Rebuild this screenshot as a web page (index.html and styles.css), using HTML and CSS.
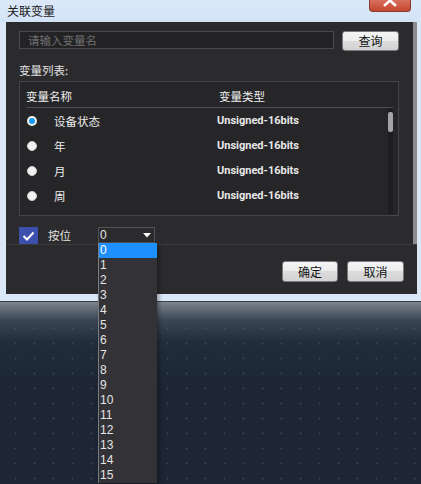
FILE: index.html
```html
<!DOCTYPE html>
<html>
<head>
    <title>关联变量</title>
    <link rel="stylesheet" href="styles.css">
</head>
<body>
    <div class="window">
        <div class="titlebar">
            <span class="title">关联变量</span>
            <div class="close-btn">
                <svg width="42" height="12" viewBox="0 0 42 12">
                    <path d="M16 -3 L26 6 M26 -3 L16 6" stroke="#fff" stroke-width="2.6" stroke-linecap="square"/>
                </svg>
            </div>
        </div>

        <div class="panel">
            <div class="upper">
                <div class="upper-body">
                    <div class="search-row">
                        <input class="search-input" type="text" placeholder="请输入变量名">
                        <button class="btn btn-query">查询</button>
                    </div>

                    <div class="list-label">变量列表:</div>

                    <div class="list-box">
                        <div class="list-head">
                            <span class="col-name">变量名称</span>
                            <span class="col-type">变量类型</span>
                        </div>
                        <div class="list-body">
                            <div class="rows">
                                <div class="row">
                                    <span class="radio checked"></span>
                                    <span class="row-name">设备状态</span>
                                    <span class="row-type">Unsigned-16bits</span>
                                </div>
                                <div class="row">
                                    <span class="radio"></span>
                                    <span class="row-name">年</span>
                                    <span class="row-type">Unsigned-16bits</span>
                                </div>
                                <div class="row">
                                    <span class="radio"></span>
                                    <span class="row-name">月</span>
                                    <span class="row-type">Unsigned-16bits</span>
                                </div>
                                <div class="row">
                                    <span class="radio"></span>
                                    <span class="row-name">周</span>
                                    <span class="row-type">Unsigned-16bits</span>
                                </div>
                                <div class="row">
                                    <span class="radio"></span>
                                    <span class="row-name">日</span>
                                    <span class="row-type">Unsigned-16bits</span>
                                </div>
                            </div>
                            <div class="list-scroll">
                                <div class="list-thumb"></div>
                            </div>
                        </div>
                    </div>

                    <div class="bit-row">
                        <span class="checkbox">
                            <svg width="19" height="17" viewBox="0 0 19 17">
                                <path d="M4.5 9 L8 12.5 L14.5 5.5" fill="none" stroke="#fff" stroke-width="2"/>
                            </svg>
                        </span>
                        <span class="bit-label">按位</span>
                        <div class="combo">
                            <span class="combo-value">0</span>
                            <svg class="combo-arrow" width="8" height="5" viewBox="0 0 8 5">
                                <path d="M0 0 L8 0 L4 4.5 Z" fill="#fff"/>
                            </svg>
                            <div class="combo-popup">
                                <div class="opt active">0</div>
                                <div class="opt">1</div>
                                <div class="opt">2</div>
                                <div class="opt">3</div>
                                <div class="opt">4</div>
                                <div class="opt">5</div>
                                <div class="opt">6</div>
                                <div class="opt">7</div>
                                <div class="opt">8</div>
                                <div class="opt">9</div>
                                <div class="opt">10</div>
                                <div class="opt">11</div>
                                <div class="opt">12</div>
                                <div class="opt">13</div>
                                <div class="opt">14</div>
                                <div class="opt">15</div>
                            </div>
                        </div>
                    </div>
                </div>
                <div class="upper-scroll"></div>
            </div>

            <div class="lower">
                <button class="btn btn-ok">确定</button>
                <button class="btn btn-cancel">取消</button>
            </div>
        </div>
    </div>

    <div class="desktop"></div>
</body>
</html>
```

FILE: styles.css
```css
body {
    margin: 0;
    width: 421px;
    height: 484px;
    overflow: hidden;
    display: flex;
    flex-direction: column;
    font-family: "Noto Sans CJK SC", "Liberation Sans", sans-serif;
    font-size: 12px;
    background-color: #1c2634;
}

.window {
    position: relative;
    z-index: 2;
    background: #d9e7f7;
    padding: 0 4px 7px 6px;
    border-bottom: 1px solid #3a3f46;
}

.titlebar {
    height: 22px;
    display: flex;
    align-items: center;
    margin-left: -6px;
    margin-right: -4px;
    padding-left: 7px;
    background: linear-gradient(to bottom, #dbe8f8, #d3e3f6);
}

.title {
    color: #1a1a1a;
    font-size: 12px;
    line-height: 22px;
}

.close-btn {
    margin-left: auto;
    margin-right: 10px;
    align-self: flex-start;
    width: 42px;
    height: 12px;
    box-sizing: border-box;
    border: 1px solid #8a3b2e;
    border-top: none;
    border-radius: 0 0 4px 4px;
    background: linear-gradient(to bottom, #d7705d, #c6452f);
    overflow: hidden;
}

.close-btn svg {
    display: block;
    margin: -1px 0 0 -1px;
}

.panel {
    background-color: #2b2b2d;
}

.upper {
    display: flex;
    height: 222px;
    border-bottom: 1px solid #3b3b3d;
}

.upper-body {
    flex: 1;
    padding: 9px 0 0 13px;
}

.upper-scroll {
    width: 4px;
    background-color: #8c8c8e;
}

.search-row {
    display: flex;
    align-items: flex-start;
    height: 20px;
}

.search-input {
    width: 315px;
    height: 18px;
    box-sizing: border-box;
    margin: 0;
    padding: 0 8px;
    border: 1px solid #4a4a4c;
    background-color: #232325;
    color: #ddd;
    font-family: "Noto Sans CJK SC", sans-serif;
    font-size: 11.5px;
    outline: none;
}

.search-input::placeholder {
    color: #6f6f70;
}

.btn {
    box-sizing: border-box;
    margin: 0;
    padding: 0;
    border: 1px solid #7a7a7e;
    border-radius: 3px;
    background: linear-gradient(to bottom, #f4f4f4 0, #ececec 50%, #dcdcdc 50%, #d2d2d2 100%);
    color: #111;
    font-family: "Noto Sans CJK SC", sans-serif;
    font-size: 12px;
    line-height: 18px;
}

.btn-query {
    margin-left: 8px;
    width: 57px;
    height: 20px;
}

.list-label {
    margin-top: 11px;
    height: 16px;
    line-height: 16px;
    color: #e2e2e2;
    font-size: 11.5px;
}

.list-box {
    margin-top: 3px;
    width: 380px;
    height: 135px;
    box-sizing: border-box;
    border: 1px solid #46464a;
    background-color: #262628;
    overflow: hidden;
}

.list-head {
    display: flex;
    height: 26px;
    box-sizing: border-box;
    margin: 0 5px 0 6px;
    padding-top: 3px;
    line-height: 23px;
    border-bottom: 1px solid #4c4c4f;
    color: #f0f0f0;
    font-size: 11.5px;
}

.col-name {
    width: 193px;
}

.list-body {
    display: flex;
    margin-right: 5px;
}

.rows {
    flex: 1;
}

.row {
    display: flex;
    align-items: center;
    height: 25px;
    color: #ececec;
    font-size: 11.5px;
}

.radio {
    width: 10px;
    height: 10px;
    box-sizing: border-box;
    margin-left: 7px;
    border-radius: 50%;
    background-color: #f2f2f2;
    border: 1px solid #cfcfcf;
}

.radio.checked {
    background-color: #1a9bf5;
    border: 2px solid #f2f2f2;
}

.row-name {
    margin-left: 17px;
    width: 163px;
}

.row-type {
    font-family: Roboto, "Liberation Sans", sans-serif;
    font-weight: bold;
    font-size: 11px;
    color: #e8e8e8;
}

.list-scroll {
    width: 5px;
    height: 106px;
    background-color: #1e1e20;
}

.list-thumb {
    margin-top: 4px;
    height: 20px;
    border-radius: 2px;
    background-color: #a4a4a6;
}

.bit-row {
    display: flex;
    align-items: flex-start;
    margin-top: 11px;
    height: 17px;
}

.checkbox {
    width: 19px;
    height: 17px;
    background-color: #3c4fac;
}

.checkbox svg {
    display: block;
}

.bit-label {
    margin-left: 10px;
    width: 50px;
    line-height: 17px;
    color: #e2e2e2;
    font-size: 11.5px;
}

.combo {
    position: relative;
    width: 57px;
    height: 16px;
    box-sizing: border-box;
    border: 1px solid #525256;
    background-color: #2b2b2d;
    display: flex;
    align-items: center;
}

.combo-value {
    margin-left: 1px;
    color: #e8e8e8;
    font-family: "Liberation Sans", sans-serif;
    font-size: 12px;
}

.combo-arrow {
    margin-left: auto;
    margin-right: 3px;
}

.combo-popup {
    position: absolute;
    top: 15px;
    left: -1px;
    width: 58px;
    border-left: 1px solid #7b7b80;
    background-color: #333236;
    box-shadow: 2px 2px 4px rgba(0, 0, 0, 0.35);
    z-index: 10;
}

.opt {
    height: 15px;
    line-height: 15px;
    padding-left: 1px;
    color: #e4e4e6;
    font-family: "Liberation Sans", sans-serif;
    font-size: 12px;
}

.opt.active {
    background-color: #1e8fff;
    color: #fff;
}

.lower {
    display: flex;
    justify-content: flex-end;
    gap: 9px;
    height: 49px;
    box-sizing: border-box;
    padding: 16px 13px 0 0;
}

.btn-ok {
    width: 56px;
    height: 21px;
}

.btn-cancel {
    width: 57px;
    height: 21px;
}

.desktop {
    flex: 1;
    background-color: #1c2634;
    background-image:
        radial-gradient(circle, rgba(70, 85, 105, 0.55) 0.8px, transparent 1.4px),
        linear-gradient(to bottom, #7d848d 0, #3b4654 18px, #222d3b 40px, #1c2634 80px);
    background-size: 19px 15px, 100% 100%;
    background-position: 6px 4px, 0 0;
}
```
